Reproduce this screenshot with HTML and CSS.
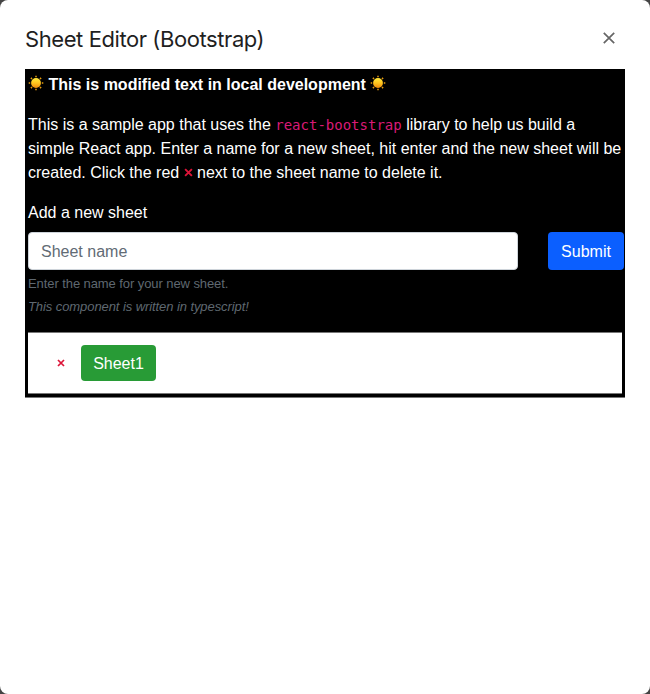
FILE: index.html
```html
<!DOCTYPE html>
<html lang="en">
<head>
<meta charset="utf-8">
<title>Sheet Editor (Bootstrap)</title>
<link rel="stylesheet" href="styles.css">
</head>
<body>
<svg class="defs" width="0" height="0" aria-hidden="true">
  <defs>
    <linearGradient id="sun-fill" x1="0" y1="0" x2="0" y2="1"><stop offset="0" stop-color="#ffe93b"/><stop offset=".5" stop-color="#ffc51f"/><stop offset="1" stop-color="#ef8a0c"/></linearGradient>
    <symbol id="sun" viewBox="0 0 16 16">
      <path d="M8 .7V2.2M8 13.8V15.3M.7 8H2.2M13.8 8H15.3M2.9 2.9L4 4M12 12L13.1 13.1M2.9 13.1L4 12M12 4L13.1 2.9" stroke="#e89c0c" stroke-width="1.5"/>
      <circle cx="8" cy="8" r="4.9" fill="url(#sun-fill)"/>
    </symbol>
    <symbol id="cross" viewBox="0 0 8 8"><path d="M1 1L7 7M7 1L1 7" stroke="#dc1438" stroke-width="1.7"/></symbol>
  </defs>
</svg>
<div class="dialog">
  <header class="dialog-header">
    <h1>Sheet Editor (Bootstrap)</h1>
    <button class="close" aria-label="Close"><svg width="12" height="12" viewBox="0 0 12 12"><path d="M.8 .8L11.2 11.2M11.2 .8L.8 11.2" stroke="#666" stroke-width="1.7"/></svg></button>
  </header>
  <main class="app">
    <p class="notice"><svg class="sun"><use href="#sun"/></svg><b>This is modified text in local development</b><svg class="sun"><use href="#sun"/></svg></p>
    <p class="intro">This is a sample app that uses the <code>react-bootstrap</code> library to help us build a<br>simple React app. Enter a name for a new sheet, hit enter and the new sheet will be<br>created. Click the red <svg class="cross"><use href="#cross"/></svg> next to the sheet name to delete it.</p>
    <form>
      <label for="sheet">Add a new sheet</label>
      <div class="row">
        <input id="sheet" type="text" placeholder="Sheet name">
        <button class="btn submit" type="button">Submit</button>
      </div>
      <div class="help">Enter the name for your new sheet.</div>
      <div class="help note">This component is written in typescript!</div>
    </form>
    <div class="sheets">
      <svg class="cross small"><use href="#cross"/></svg>
      <button class="btn sheet">Sheet1</button>
    </div>
  </main>
</div>
</body>
</html>
```
FILE: styles.css
```css
* { box-sizing: border-box; }
body { margin: 0; background: #444; font: 16px/24px "Liberation Sans", Arial, sans-serif; }
.defs { position: absolute; }
.dialog { height: 694px; padding: 0 25px; background: #fff; border-radius: 8px; overflow: hidden; }
.dialog-header { display: flex; justify-content: space-between; align-items: center; height: 69px; padding: 8px 10px 0 0; }
h1 { margin: 0; font: 400 22px/28px Inter, sans-serif; letter-spacing: -0.42px; color: #1f1f1f; white-space: nowrap; }
.close { display: flex; padding: 0; margin-top: -1px; border: 0; background: none; }
.app { height: 329px; padding: 4px 3px 3px; background: #000; color: #fff; border-bottom: 1px solid #777; }
p { margin: 0; white-space: nowrap; }
.notice { display: flex; align-items: center; gap: 4.5px; height: 24px; margin-bottom: 16px; }
.sun { width: 16px; height: 16px; margin-top: -4px; }
.intro { margin-bottom: 16px; }
code { font: 14px/20px "DejaVu Sans Mono", monospace; color: #d91a76; }
.cross { width: 9px; height: 9px; vertical-align: 1px; }
label { display: block; margin-bottom: 7px; }
.row { display: flex; gap: 30px; margin-right: -2px; }
input { flex: 1; min-width: 0; height: 38px; padding: 7px 12px 5px; border: 1px solid #ced4da; border-radius: 4px; font: inherit; background: #fff; }
input::placeholder { color: #626b75; opacity: 1; }
.btn { border: 0; border-radius: 4px; color: #fff; font: inherit; padding: 1px 0 0; }
.submit { width: 76px; height: 38px; padding-top: 2px; background: #0b5fff; }
.help { height: 19px; margin-top: 4px; font-size: 13px; line-height: 19px; letter-spacing: -0.08px; color: #5f6870; }
.note { font-style: italic; }
.sheets { display: flex; align-items: center; height: 62px; margin-top: 16px; padding-left: 29px; gap: 16px; background: #fff; border: solid #777; border-width: 1px 0; }
.small { width: 8px; height: 8px; }
.sheet { width: 75px; height: 36px; padding-top: 2px; background: #289b36; }
```
